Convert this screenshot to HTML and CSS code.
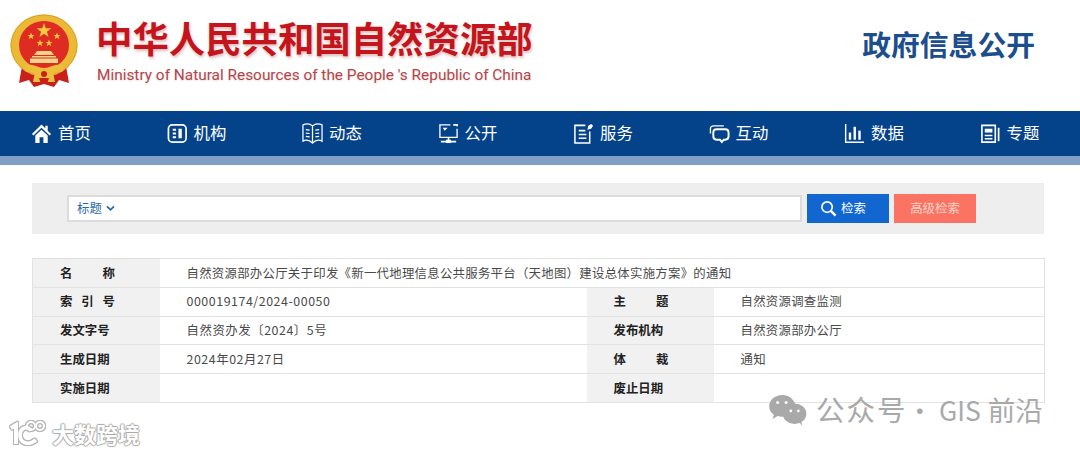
FILE: index.html
```html
<!DOCTYPE html>
<html lang="zh-CN">
<head>
<meta charset="utf-8">
<title>政府信息公开</title>
<link rel="stylesheet" href="styles.css">
</head>
<body>
<header class="top">
  <svg class="emblem" viewBox="0 0 70 75" width="70" height="75">
    <path d="M12 52 L9 69 L19 66 L24 73 L34 70 L44 73 L49 66 L59 69 L56 52 Z" fill="#c9201c"/>
    <ellipse cx="34" cy="31.500" rx="33.500" ry="31" fill="#ecb936"/>
    <ellipse cx="34" cy="31.500" rx="33" ry="30.500" fill="none" stroke="#d9a02c" stroke-width="1"/>
    <ellipse cx="34" cy="31" rx="25" ry="24" fill="#df2c22"/>
    <polygon points="34,9 35.800,14.300 41.400,14.300 36.900,17.700 38.600,23 34,19.700 29.400,23 31.100,17.700 26.600,14.300 32.200,14.300" fill="#f7cb3e"/>
    <polygon points="21,18.500 21.900,21 24.600,21 22.400,22.600 23.300,25.200 21,23.600 18.700,25.200 19.600,22.600 17.400,21 20.100,21" fill="#f7cb3e"/>
    <polygon points="47,18.500 47.900,21 50.600,21 48.400,22.600 49.300,25.200 47,23.600 44.700,25.200 45.600,22.600 43.400,21 46.100,21" fill="#f7cb3e"/>
    <polygon points="30,25.500 30.900,28 33.600,28 31.400,29.600 32.300,32.200 30,30.600 27.700,32.200 28.600,29.600 26.400,28 29.100,28" fill="#f7cb3e"/>
    <polygon points="39,25.500 39.900,28 42.600,28 40.400,29.600 41.300,32.200 39,30.600 36.700,32.200 37.600,29.600 35.400,28 38.100,28" fill="#f7cb3e"/>
    <path d="M27 37 H41 L44 41 H24 Z M22 42 H46 V43.500 H22 Z M20 44.500 H48 V49 H20 Z" fill="#f4d38a"/>
    <path d="M14 51 C22 49 28 54 34 54 C40 54 46 49 54 51 L52 58 C46 56 41 60 34 60 C27 60 22 56 16 58 Z" fill="#edbd3c"/>
    <path d="M25 58 H43 L45 68 H23 Z" fill="#edbd3c"/>
    <path d="M29 64 H39 L37 70 H31 Z" fill="#c9201c"/>
    <circle cx="34" cy="60" r="3" fill="#c9201c"/>
  </svg>
  <div class="brand">
    <div class="brand-cn">中华人民共和国自然资源部</div>
    <div class="brand-en">Ministry of Natural Resources of the People ′s Republic of China</div>
  </div>
  <div class="top-right">政府信息公开</div>
</header>

<nav class="nav">
  <a class="nav-item"><svg class="ico" viewBox="0 0 22 22"><path d="M11 1.500 L1 11.500 L2.500 13 L11 5 L19.500 13 L21 11.500 L17.500 8 V3 H15 V5.500 Z M4.500 13 V21 H9 V15 H13 V21 H17.500 V13 L11 7 Z" fill="#fff"/></svg><span>首页</span></a>
  <a class="nav-item"><svg class="ico" viewBox="0 0 22 22" fill="none" stroke="#fff"><rect x="1.500" y="2" width="18.500" height="18" rx="4" stroke-width="1.800"/><path d="M6 7 H9.500 M6 11 H9.500 M6 15 H9.500" stroke-width="2"/><rect x="12" y="6" width="3.500" height="10" fill="#fff" stroke="none"/></svg><span>机构</span></a>
  <a class="nav-item"><svg class="ico" viewBox="0 0 22 22" fill="none" stroke="#fff" stroke-width="1.300"><path d="M1 2 C4 0.500 8 0.500 11 3 C14 0.500 18 0.500 21 2 V19 C18 17.500 14 18 11 21 C8 18 4 17.500 1 19 Z M11 3 V21"/><path d="M4 7 L8 7.500 M4 10.500 L8 11 M4 14 L8 14.500 M14 7.500 L18 7 M14 11 L18 10.500 M14 14.500 L18 14"/></svg><span>动态</span></a>
  <a class="nav-item"><svg class="ico" viewBox="0 0 22 22" fill="none" stroke="#fff" stroke-width="1.400"><path d="M13 2 H2 V15 H20 V6"/><path d="M16 2 H20 V3.500" stroke-width="1.800"/><path d="M5 5 L10 5 L7 8 Z" fill="#fff" stroke="none"/><path d="M11 15 V19 M3 19.500 H19" stroke-width="1.600"/><rect x="8.500" y="17.500" width="5" height="3.500" fill="#fff" stroke="none"/></svg><span>公开</span></a>
  <a class="nav-item"><svg class="ico" viewBox="0 0 22 22" fill="none" stroke="#fff" stroke-width="1.600"><path d="M13 2.500 H2 V21 H17.500 V9"/><path d="M6 8 H13 M6 12 H14 M6 16 H14"/><path d="M15 7 L16 3 L19 1 L21 3 L19 6 Z" fill="#fff" stroke="none"/></svg><span>服务</span></a>
  <a class="nav-item"><svg class="ico" viewBox="0 0 22 22" fill="none" stroke="#fff"><path d="M1.500 11 V6 C1.500 4 3 3 5 3 H15.500" stroke-width="1.400"/><path d="M8 6.500 H17 C19.500 6.500 20.500 8 20.500 10 V14 C20.500 16 19.500 17.500 17 17.500 H15.500 L13.500 20 L11.500 17.500 H8 C5.500 17.500 4.500 16 4.500 14 V10 C4.500 8 5.500 6.500 8 6.500Z" stroke-width="2"/></svg><span>互动</span></a>
  <a class="nav-item"><svg class="ico" viewBox="0 0 22 22" fill="#fff"><path d="M1 1 H2.500 V19.500 H21 V21 H1 Z"/><rect x="5" y="10" width="2.500" height="7.500"/><rect x="10" y="4" width="2.500" height="13.500"/><rect x="15" y="8" width="2.500" height="9.500"/></svg><span>数据</span></a>
  <a class="nav-item"><svg class="ico" viewBox="0 0 22 22" fill="none" stroke="#fff" stroke-width="1.700"><path d="M16 2.500 H2 V20 H16 Z"/><path d="M19.500 5 V19" stroke-width="1.800"/><path d="M5 6 H13 V10 H5 Z" fill="#fff" stroke="none"/><path d="M5 13 H13 M5 16.500 H13" stroke-width="1.500"/></svg><span>专题</span></a>
</nav>
<div class="nav-strip"></div>

<main class="content">
  <section class="search">
    <div class="search-input">
      <span class="search-type">标题</span>
      <svg class="chev" viewBox="0 0 10 8" width="9" height="7"><path d="M1 1.500 L5 5.500 L9 1.500" fill="none" stroke="#2a6aa8" stroke-width="2"/></svg>
    </div>
    <button class="btn btn-blue"><svg viewBox="0 0 18 18" width="17" height="17" fill="none" stroke="#fff"><circle cx="7.500" cy="7.500" r="5.500" stroke-width="1.800"/><path d="M11.500 11.500 L16.500 16.500" stroke-width="2.600"/></svg><span>检索</span></button>
    <button class="btn btn-red">高级检索</button>
  </section>

  <table class="info">
    <colgroup><col class="col-a"><col class="col-b"><col class="col-c"><col class="col-d"></colgroup>
    <tr><th><span class="spread">名称</span></th><td colspan="3">自然资源部办公厅关于印发《新一代地理信息公共服务平台（天地图）建设总体实施方案》的通知</td></tr>
    <tr><th><span class="spread">索引号</span></th><td class="num">000019174/2024-00050</td><th><span class="spread">主题</span></th><td>自然资源调查监测</td></tr>
    <tr><th>发文字号</th><td class="num">自然资办发〔2024〕5号</td><th>发布机构</th><td>自然资源部办公厅</td></tr>
    <tr><th>生成日期</th><td class="num">2024年02月27日</td><th><span class="spread">体裁</span></th><td>通知</td></tr>
    <tr><th>实施日期</th><td></td><th>废止日期</th><td></td></tr>
  </table>
</main>

<div class="wm-left">
  <svg viewBox="0 0 40 26" width="40" height="26" fill="none" stroke="#fff"><path d="M2 8 L7 5 V24" stroke-width="4"/><path d="M22 10 C16 5 11 9 11 15 C11 23 19 26 27 20" stroke-width="3.600"/><circle cx="22" cy="6" r="4" stroke-width="2"/><circle cx="31" cy="6" r="4" stroke-width="2"/></svg>
  <span>大数跨境</span>
</div>
<div class="wm-right">
  <svg viewBox="0 0 42 34" width="40" height="32"><path d="M15 1 C7 1 1 6.500 1 13 C1 17 3 20 6 22 L4.500 26.500 L10 23.500 C12 24 14 24.500 16 24 C27 20 29 14 29 12 C27 5 22 1 15 1Z" fill="#a9a9a9"/><ellipse cx="28" cy="21" rx="12.500" ry="11" fill="#a9a9a9"/><path d="M33 30 L36 34 L35 28 Z" fill="#a9a9a9"/><g fill="#fff"><circle cx="10" cy="9" r="1.600"/><circle cx="19" cy="9" r="1.600"/><circle cx="24" cy="18" r="1.500"/><circle cx="32" cy="18" r="1.500"/></g></svg>
  <span class="wm-text"><span class="wm-cn">公众号</span><span class="wm-dot">·</span>GIS<span class="wm-end">前沿</span></span>
</div>
</body>
</html>
```
FILE: styles.css
```css
* { box-sizing: border-box; }
html, body { margin: 0; padding: 0; }
body {
  position: relative;
  width: 1080px;
  height: 452px;
  overflow: hidden;
  background: #fff;
  font-family: "Liberation Sans", "Noto Sans CJK SC", sans-serif;
  text-spacing-trim: space-all;
}

.top {
  height: 111px;
  display: flex;
  align-items: flex-start;
  padding: 14px 45px 0 10px;
}
.emblem { flex: none; filter: blur(.4px); }
.brand { margin-left: 16px; margin-top: 1px; }
.brand-cn {
  font: 700 36.4px/45px "Noto Sans CJK SC", sans-serif;
  color: #c5141b;
  white-space: nowrap;
  text-shadow: 1px 2px 3px rgba(150, 60, 60, .35);
}
.brand-en {
  margin-top: 5px;
  margin-left: 1px;
  font: 400 15.4px/20px "Roboto", sans-serif;
  color: #b2474b;
  white-space: nowrap;
  text-shadow: 0 1px 2px rgba(150, 60, 60, .2);
}
.top-right {
  margin-left: auto;
  margin-top: 8px;
  font: 700 28.8px/44px "Noto Sans CJK SC", sans-serif;
  color: #1c4d8c;
  white-space: nowrap;
}

.nav {
  height: 45px;
  background: #04438a;
  display: grid;
  grid-template-columns: repeat(8, 135.5px);
  padding-left: 31px;
}
.nav-item {
  display: flex;
  align-items: center;
  gap: 6px;
  color: #fff;
  font: 400 16.4px/1 "Noto Sans CJK SC", sans-serif;
}
.nav-item span { position: relative; top: -1px; }
.ico { width: 21px; height: 21px; flex: none; }
.nav-strip { height: 9px; background: #7f9fc4; }

.content { padding: 18px 36px 0 32px; }
.search {
  height: 51px;
  background: #eee;
  display: flex;
  align-items: center;
  padding-left: 35px;
}
.search-input {
  width: 735px;
  height: 27px;
  background: #fff;
  border: 2px solid #dcdcdc;
  display: flex;
  align-items: center;
  gap: 4px;
  padding-left: 8px;
  color: #2a6aa8;
  font: 400 12.4px/1 "Noto Sans CJK SC", sans-serif;
}
.btn {
  height: 29px;
  width: 82px;
  border: 0;
  padding: 0;
  color: #fff;
  display: flex;
  align-items: center;
  justify-content: center;
  gap: 4px;
  font: 400 12.4px/1 "Noto Sans CJK SC", sans-serif;
}
.btn-blue { background: #1266d0; margin-left: 5px; justify-content: flex-start; padding-left: 13px; }
.btn-red { background: #fb7463; margin-left: 5px; color: #fbd5cd; }

.info {
  margin-top: 24px;
  width: 1012px;
  border-collapse: collapse;
  table-layout: fixed;
  font: 400 12.4px/1 "Noto Sans CJK SC", sans-serif;
  color: #4a4a4a;
}
.col-a { width: 127px; }
.col-b { width: 427px; }
.col-c { width: 127px; }
.col-d { width: 331px; }
.info tr { height: 28.8px; }
.info th, .info td { border: 1px solid #e2e2e2; padding: 0; }
.info th {
  background: #f1f1f1;
  color: #222;
  font-weight: 700;
  text-align: left;
  padding-left: 27px;
  border-left: 0;
  border-right: 0;
}
.info tr th:first-child { border-left: 1px solid #e2e2e2; }
.info td { padding-left: 27px; border-left: 0; border-right: 0; letter-spacing: .28px; }
.info td.num { letter-spacing: .55px; }
.info td:last-child { border-right: 1px solid #e2e2e2; }
.spread { display: inline-block; width: 55px; text-align-last: justify; }

.wm-left {
  position: absolute;
  left: 9px;
  top: 420px;
  display: flex;
  align-items: center;
  gap: 3px;
  color: #fff;
  font: 700 22px/26px "Noto Sans CJK SC", sans-serif;
  text-shadow: 1px 0 1px #aaa, -1px 0 1px #aaa, 0 1px 1px #aaa, 0 -1px 1px #aaa;
}
.wm-left svg { filter: drop-shadow(1px 0 0 #b5b5b5) drop-shadow(-1px 0 0 #b5b5b5) drop-shadow(0 1px 0 #b5b5b5) drop-shadow(0 -1px 0 #b5b5b5); }
.wm-right {
  position: absolute;
  left: 768px;
  top: 391px;
  display: flex;
  align-items: center;
  gap: 8px;
  color: #a9a9a9;
  font: 400 26.5px/36px "Noto Sans CJK SC", sans-serif;
  white-space: nowrap;
}
.wm-cn { font-size: 28.5px; letter-spacing: 2px; }
.wm-dot { margin: 0 6px 0 -1px; }
.wm-end { margin-left: 7px; font-size: 27.5px; }
```
